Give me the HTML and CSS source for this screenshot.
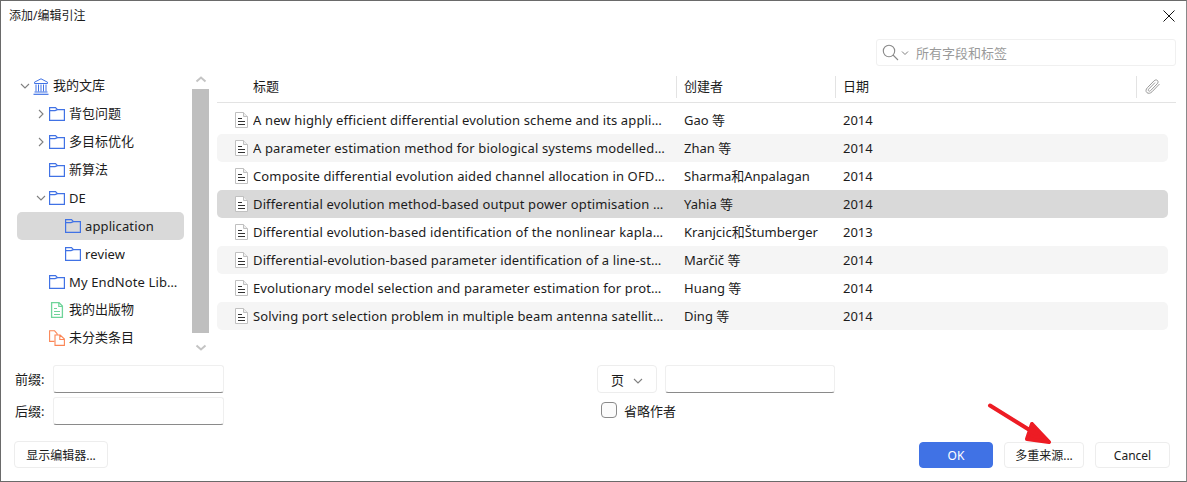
FILE: index.html
```html
<!DOCTYPE html>
<html lang="zh-CN">
<head>
<meta charset="utf-8">
<title>添加/编辑引注</title>
<link rel="stylesheet" href="styles.css">
</head>
<body>
<svg class="defs" width="0" height="0" aria-hidden="true">
  <symbol id="folder" viewBox="0 0 16 14"><path d="M.6 13.400V.6h5.900l2 2h6.900v10.800zM.6 3.600h5.400l2.500-1" fill="none" stroke="#4072e5" stroke-width="1.200"/></symbol>
  <symbol id="doc" viewBox="0 0 13 16"><path d="M.5.5h8l4 4v11H.5z" fill="#fff" stroke="#c0c0c0"/><path d="M8.500.5v4h4" fill="#eee" stroke="#c0c0c0"/><path d="M3 6.500h4M3 9.500h7M3 12.500h7" stroke="#333" fill="none"/></symbol>
  <symbol id="chev-r" viewBox="0 0 8 10"><path d="M2 1l4 4-4 4" fill="none" stroke="#808080" stroke-width="1.100"/></symbol>
  <symbol id="chev-d" viewBox="0 0 10 8"><path d="M1 2l4 4 4-4" fill="none" stroke="#808080" stroke-width="1.100"/></symbol>
</svg>
<div class="dialog">
  <header class="titlebar">
    <span class="title">添加/编辑引注</span>
    <svg class="close" width="12" height="12" viewBox="0 0 12 12"><path d="M.5.5l11 11M11.500.5l-11 11" stroke="#111" fill="none"/></svg>
  </header>

  <div class="searchrow">
    <div class="search">
      <svg class="search-icon" width="17" height="17" viewBox="0 0 17 17"><circle cx="7" cy="7" r="5.700" fill="none" stroke="#8a8a8a" stroke-width="1.100"/><path d="M11 11l5 5" stroke="#8a8a8a" stroke-width="1.100"/></svg>
      <svg class="search-chev" width="8" height="6" viewBox="0 0 8 6"><path d="M1 1.500l3 3 3-3" fill="none" stroke="#808080"/></svg>
      <input class="search-input" type="text" placeholder="所有字段和标签">
    </div>
  </div>

  <div class="main">
    <nav class="tree">
      <div class="tree-list">
        <div class="node l0"><span class="twisty"><svg width="10" height="8"><use href="#chev-d"/></svg></span>
          <svg class="ico" width="16" height="17" viewBox="0 0 16 17"><path d="M8 .8L1.500 4.200v1.300h13V4.200zM3 6.500v7M5.500 6.500v7M8 6.500v7M10.500 6.500v7M13 6.500v7M1.500 14h13" fill="none" stroke="#4072e5"/><path d="M.5 16.300h15" stroke="#4072e5" stroke-width="1.200"/></svg>
          <span class="label cjk">我的文库</span></div>
        <div class="node l1"><span class="twisty"><svg width="8" height="10"><use href="#chev-r"/></svg></span><svg class="ico" width="16" height="14"><use href="#folder"/></svg><span class="label cjk">背包问题</span></div>
        <div class="node l1"><span class="twisty"><svg width="8" height="10"><use href="#chev-r"/></svg></span><svg class="ico" width="16" height="14"><use href="#folder"/></svg><span class="label cjk">多目标优化</span></div>
        <div class="node l1"><span class="twisty"></span><svg class="ico" width="16" height="14"><use href="#folder"/></svg><span class="label cjk">新算法</span></div>
        <div class="node l1"><span class="twisty"><svg width="10" height="8"><use href="#chev-d"/></svg></span><svg class="ico" width="16" height="14"><use href="#folder"/></svg><span class="label">DE</span></div>
        <div class="node l2 selected"><span class="twisty"></span><svg class="ico" width="16" height="14"><use href="#folder"/></svg><span class="label">application</span></div>
        <div class="node l2"><span class="twisty"></span><svg class="ico" width="16" height="14"><use href="#folder"/></svg><span class="label">review</span></div>
        <div class="node l1"><span class="twisty"></span><svg class="ico" width="16" height="14"><use href="#folder"/></svg><span class="label">My EndNote Library</span></div>
        <div class="node l1"><span class="twisty"></span><svg class="ico" width="16" height="16" viewBox="0 0 16 16"><path d="M2.600.7h7.400l3.400 3.400v11.200H2.600z" fill="none" stroke="#6fd49a" stroke-width="1.300"/><path d="M9.800.7v3.800h3.600M5 6.500h3M5 9.500h6M5 12.500h6" fill="none" stroke="#6fd49a" stroke-width="1.200"/></svg><span class="label cjk">我的出版物</span></div>
        <div class="node l1"><span class="twisty"></span><svg class="ico" width="16" height="16" viewBox="0 0 16 16"><path d="M5.500 11.400H.6V.8h5l2.500 2.800V5" fill="none" stroke="#fb8656" stroke-width="1.100"/><path d="M6 15.400V5h5.200L15.400 9v6.400zM10.800 5.200V9.500h4.400" fill="none" stroke="#fb8656" stroke-width="1.100"/></svg><span class="label cjk">未分类条目</span></div>
      </div>
      <div class="scrollbar">
        <svg class="scroll-arrow" width="12" height="7" viewBox="0 0 12 7"><path d="M1.500 5.500L6 1.500l4.500 4" fill="none" stroke="#c4c4c4" stroke-width="2"/></svg>
        <div class="thumb"></div>
        <svg class="scroll-arrow" width="12" height="7" viewBox="0 0 12 7"><path d="M1.500 1.500L6 5.500l4.500-4" fill="none" stroke="#c4c4c4" stroke-width="2"/></svg>
      </div>
    </nav>

    <section class="items">
      <div class="items-head">
        <div class="head-cell first"><span class="cjk">标题</span></div>
        <div class="head-cell"><span class="cjk">创建者</span></div>
        <div class="head-cell"><span class="cjk">日期</span></div>
        <div class="head-cell clip">
          <svg width="17" height="16" viewBox="0 0 17 16"><path d="M15.500 5L8 12.800c-1.600 1.600-3.700 2-5.100.8s-1.100-3.300.5-4.900L10 1.900c1.100-1.100 2.600-1.300 3.500-.4s.7 2.300-.4 3.400L6.600 11.600c-.7.700-1.500.8-2 .3s-.4-1.300.3-2l6.100-6.300" fill="none" stroke="#9a9a9a"/></svg>
        </div>
      </div>
      <div class="rows">
        <div class="row"><div class="cell-title"><svg class="doc" width="13" height="16"><use href="#doc"/></svg><span class="t">A new highly efficient differential evolution scheme and its application to waveform inversion</span></div><div class="cell">Gao 等</div><div class="cell">2014</div></div>
        <div class="row odd"><div class="cell-title"><svg class="doc" width="13" height="16"><use href="#doc"/></svg><span class="t">A parameter estimation method for biological systems modelled by ODE/DDE models</span></div><div class="cell">Zhan 等</div><div class="cell">2014</div></div>
        <div class="row"><div class="cell-title"><svg class="doc" width="13" height="16"><use href="#doc"/></svg><span class="t">Composite differential evolution aided channel allocation in OFDMA systems</span></div><div class="cell">Sharma和Anpalagan</div><div class="cell">2014</div></div>
        <div class="row active"><div class="cell-title"><svg class="doc" width="13" height="16"><use href="#doc"/></svg><span class="t">Differential evolution method-based output power optimisation of nonlinear systems</span></div><div class="cell">Yahia 等</div><div class="cell">2014</div></div>
        <div class="row"><div class="cell-title"><svg class="doc" width="13" height="16"><use href="#doc"/></svg><span class="t">Differential evolution-based identification of the nonlinear kaplan turbine model</span></div><div class="cell">Kranjcic和Štumberger</div><div class="cell">2013</div></div>
        <div class="row odd"><div class="cell-title"><svg class="doc" width="13" height="16"><use href="#doc"/></svg><span class="t">Differential-evolution-based parameter identification of a line-start machine model</span></div><div class="cell">Marčič 等</div><div class="cell">2014</div></div>
        <div class="row"><div class="cell-title"><svg class="doc" width="13" height="16"><use href="#doc"/></svg><span class="t">Evolutionary model selection and parameter estimation for protein structure models</span></div><div class="cell">Huang 等</div><div class="cell">2014</div></div>
        <div class="row odd"><div class="cell-title"><svg class="doc" width="13" height="16"><use href="#doc"/></svg><span class="t">Solving port selection problem in multiple beam antenna satellite communication links</span></div><div class="cell">Ding 等</div><div class="cell">2014</div></div>
      </div>
    </section>
  </div>

  <div class="locator">
    <div class="affixes">
      <label class="field"><span class="field-label">前缀:</span><input class="text-input affix" type="text"></label>
      <label class="field"><span class="field-label">后缀:</span><input class="text-input affix" type="text"></label>
    </div>
    <div class="pages">
      <div class="page-line">
        <button class="btn page-select" type="button">页<svg class="page-chev" width="10" height="8"><use href="#chev-d"/></svg></button>
        <input class="text-input page-input" type="text">
      </div>
      <label class="omit"><input class="check" type="checkbox"><span>省略作者</span></label>
    </div>
  </div>

  <footer class="footer">
    <button class="btn editor" type="button">显示编辑器...</button>
    <div class="actions">
      <button class="btn primary" type="button">OK</button>
      <button class="btn sources" type="button">多重来源...</button>
      <button class="btn cancel" type="button">Cancel</button>
    </div>
  </footer>

  <svg class="annotation" width="70" height="46" viewBox="0 0 70 46"><path d="M4 3.500L50 32M46 22L63 40L41 37z" fill="#ed1c24" stroke="#ed1c24" stroke-width="4" stroke-linecap="round" stroke-linejoin="round"/></svg>
</div>
</body>
</html>
```
FILE: styles.css
```css
* { box-sizing: border-box; }
html, body { margin: 0; padding: 0; background: #fff; }
body { font-family: "Noto Sans", "Noto Sans CJK SC", sans-serif; font-size: 13px; color: #1c1c1c; }
.defs { position: absolute; }
.dialog { position: relative; width: 1187px; height: 482px; border: 1px solid #6a6a6a; border-right-color: #8a8a8a; background: #fff; overflow: hidden; display: flex; flex-direction: column; }

.titlebar { height: 30px; display: flex; align-items: center; justify-content: space-between; padding: 0 11px 1px 8px; flex: none; }
.title { font-size: 12px; line-height: 16px; }
.close { display: block; }

.searchrow { display: flex; justify-content: flex-end; padding: 8px 10px 0 0; height: 41px; flex: none; }
.search { width: 300px; height: 27px; border: 1px solid #f0f0f0; border-radius: 3px; display: flex; align-items: center; padding-left: 5px; background: #fff; }
.search-icon { flex: none; }
.search-chev { flex: none; margin-left: 2px; margin-top: 1px; }
.search-input { border: 0; outline: 0; padding: 0; margin-left: 7px; flex: 1; min-width: 0; font: inherit; background: transparent; }
.search-input::placeholder { color: #9a9a9a; opacity: 1; }

.main { display: flex; flex: none; height: 287px; padding-left: 16px; }

.tree { width: 200px; flex: none; display: flex; }
.tree-list { width: 167px; flex: none; }
.node { height: 28px; display: flex; align-items: center; border-radius: 5px; padding-right: 4px; }
.node.l1 { padding-left: 16px; }
.node.l2 { padding-left: 32px; }
.node.selected { background: #d9d9d9; }
.twisty { width: 16px; height: 16px; flex: none; display: flex; align-items: center; justify-content: center; }
.twisty svg { display: block; }
.ico { flex: none; display: block; }
.label { margin-left: 4px; white-space: nowrap; overflow: hidden; text-overflow: ellipsis; min-width: 0; line-height: 18px; letter-spacing: .12px; }
.cjk { display: block; line-height: 18px; margin-top: -2px; letter-spacing: 0; }
.scrollbar { width: 17px; margin-left: 8px; display: flex; flex-direction: column; align-items: center; height: 282px; }
.scroll-arrow { display: block; flex: none; }
.scroll-arrow:first-child { margin-top: 4px; margin-bottom: 6px; }
.scroll-arrow:last-child { margin-top: 11px; }
.thumb { width: 17px; height: 244px; background: #bfbfbf; flex: none; }

.items { width: 959px; flex: none; }
.items-head { display: grid; grid-template-columns: 459px 159px 301px 40px; height: 31px; border-bottom: 1px solid #e3e3e3; align-items: center; padding-bottom: 1px; }
.head-cell { height: 22px; border-left: 1px solid #e3e3e3; padding-left: 7px; display: flex; align-items: center; }
.head-cell.first { border-left: 0; padding-left: 36px; }
.head-cell.clip { padding-left: 7px; }
.rows { padding: 3px 8px 0 0; }
.row { display: grid; grid-template-columns: 459px 159px 1fr; height: 28px; align-items: center; border-radius: 5px; }
.row.odd { background: #f5f5f5; }
.row.active { background: #d9d9d9; }
.cell-title { display: flex; align-items: center; padding: 0 9px 0 18px; min-width: 0; }
.doc { flex: none; display: block; margin-right: 5px; }
.t { white-space: nowrap; overflow: hidden; text-overflow: ellipsis; min-width: 0; letter-spacing: .14px; line-height: 18px; }
.cell { padding-left: 8px; white-space: nowrap; line-height: 18px; height: 18px; margin-top: -1px; }

.locator { display: flex; padding: 6px 0 0 14px; flex: none; height: 82px; }
.affixes { width: 209px; display: flex; flex-direction: column; gap: 4px; flex: none; }
.field { display: flex; align-items: center; height: 28px; }
.field-label { width: 38px; flex: none; margin-top: -1px; }
.text-input { height: 28px; border: 1px solid #efefef; border-bottom-color: #8a8a8a; border-radius: 3px; background: #fff; outline: 0; padding: 0 6px; font: inherit; }
.affix { width: 171px; }
.pages { margin-left: 373px; width: 240px; }
.page-line { display: flex; gap: 8px; }
.page-input { width: 170px; }
.page-select { width: 60px; height: 28px; gap: 9px; padding-left: 1px; }
.page-chev { margin-top: 3px; }
.omit { display: flex; align-items: center; gap: 7px; height: 16px; margin: 9px 0 0 4px; }
.check { appearance: none; width: 16px; height: 16px; margin: 0; border: 1px solid #8a8a8a; border-radius: 4px; background: #fbfbfb; flex: none; }

.btn { display: inline-flex; align-items: center; justify-content: center; border: 1px solid #ededed; border-radius: 4px; background: #fff; font: inherit; font-size: 12px; color: #1c1c1c; padding: 0; }
.footer { display: flex; justify-content: space-between; align-items: flex-start; padding: 0 16px 0 13px; flex: none; }
.actions { display: flex; gap: 11px; margin-top: 1px; }
.editor { width: 94px; height: 27px; }
.primary { width: 74px; height: 26px; background: #4072e5; border-color: #4072e5; color: #fff; }
.sources { width: 80px; height: 26px; }
.cancel { width: 75px; height: 26px; }
.page-select { font-size: 13px; }

.annotation { position: absolute; left: 985px; top: 401px; pointer-events: none; }
```
